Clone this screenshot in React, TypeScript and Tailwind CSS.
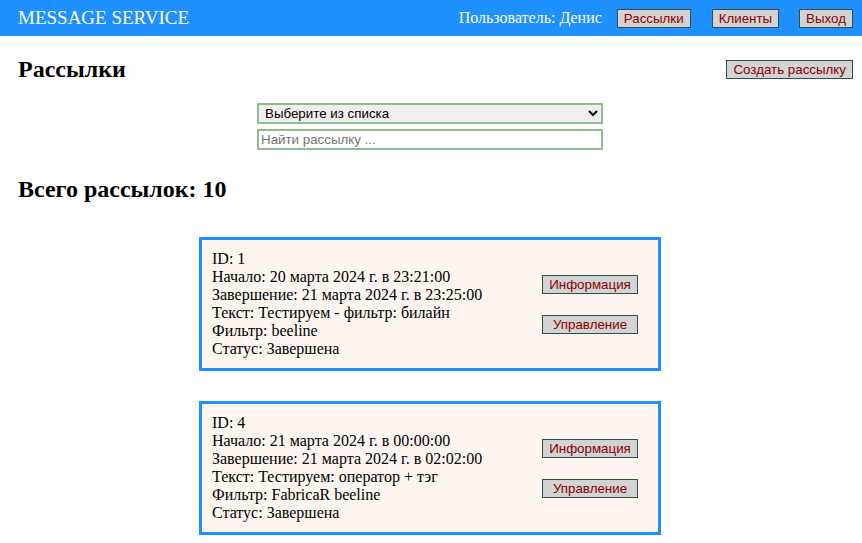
import React from "react";

interface Mailing {
  id: number;
  start: string;
  end: string;
  text: string;
  filter: string;
  status: string;
}

const mailings: Mailing[] = [
  {
    id: 1,
    start: "20 марта 2024 г. в 23:21:00",
    end: "21 марта 2024 г. в 23:25:00",
    text: "Тестируем - фильтр: билайн",
    filter: "beeline",
    status: "Завершена",
  },
  {
    id: 4,
    start: "21 марта 2024 г. в 00:00:00",
    end: "21 марта 2024 г. в 02:02:00",
    text: "Тестируем: оператор + тэг",
    filter: "FabricaR beeline",
    status: "Завершена",
  },
];

const btn =
  "border border-[#2f4f4f] bg-[#d3d3d3] text-[#8b0000] px-[6px] py-px text-[13.33px] leading-[15px] font-['Liberation_Sans',Arial,sans-serif]";

export default function App() {
  return (
    <div className="min-h-screen bg-white font-['Liberation_Serif','Times_New_Roman',serif] text-black">
      <header className="h-9 bg-[#1e90ff] flex items-center justify-between pl-[18px] pr-[9px] text-white">
        <div className="text-[19px]">MESSAGE SERVICE</div>
        <div className="flex items-center">
          <span className="text-base mr-[15px]">Пользователь: Денис</span>
          <button type="button" className={btn}>
            Рассылки
          </button>
          <button type="button" className={btn + " ml-[21px]"}>
            Клиенты
          </button>
          <button type="button" className={btn + " ml-[20px]"}>
            Выход
          </button>
        </div>
      </header>

      <main className="px-[18px]">
        <div className="flex items-center justify-between mt-5">
          <h2 className="text-2xl font-bold leading-[27px]">Рассылки</h2>
          <button type="button" className={btn + " -mr-[9px]"}>
            Создать рассылку
          </button>
        </div>

        <div className="flex flex-col items-center mt-5 pr-[2px]">
          <select className="w-[346px] h-[21px] border-2 border-[#8fbc8f] bg-[#efefef] text-[13.33px] font-['Liberation_Sans',Arial,sans-serif] pl-[2px]">
            <option>Выберите из списка</option>
          </select>
          <input
            type="text"
            placeholder="Найти рассылку ..."
            className="w-[346px] h-[21px] mt-[5px] border-2 border-[#8fbc8f] bg-white px-[2px] text-[13.33px] font-['Liberation_Sans',Arial,sans-serif] placeholder:text-[#757575]"
          />
        </div>

        <h2 className="text-2xl font-bold leading-[27px] mt-[26px]">Всего рассылок: 10</h2>

        <div className="flex flex-col items-center mt-[34px] pr-[2px]">
          {mailings.map((m) => (
            <div
              key={m.id}
              className="w-[462px] border-[3px] border-[#1e90ff] bg-[#fff5f0] pl-[10px] pr-[20px] py-[10px] mb-[30px] flex items-center justify-between"
            >
              <div className="text-base leading-[18px]">
                <div>ID: {m.id}</div>
                <div>Начало: {m.start}</div>
                <div>Завершение: {m.end}</div>
                <div>Текст: {m.text}</div>
                <div>Фильтр: {m.filter}</div>
                <div>Статус: {m.status}</div>
              </div>
              <div className="flex flex-col gap-[21px]">
                <button type="button" className={btn + " w-[96px]"}>
                  Информация
                </button>
                <button type="button" className={btn + " w-[96px]"}>
                  Управление
                </button>
              </div>
            </div>
          ))}
        </div>
      </main>
    </div>
  );
}
